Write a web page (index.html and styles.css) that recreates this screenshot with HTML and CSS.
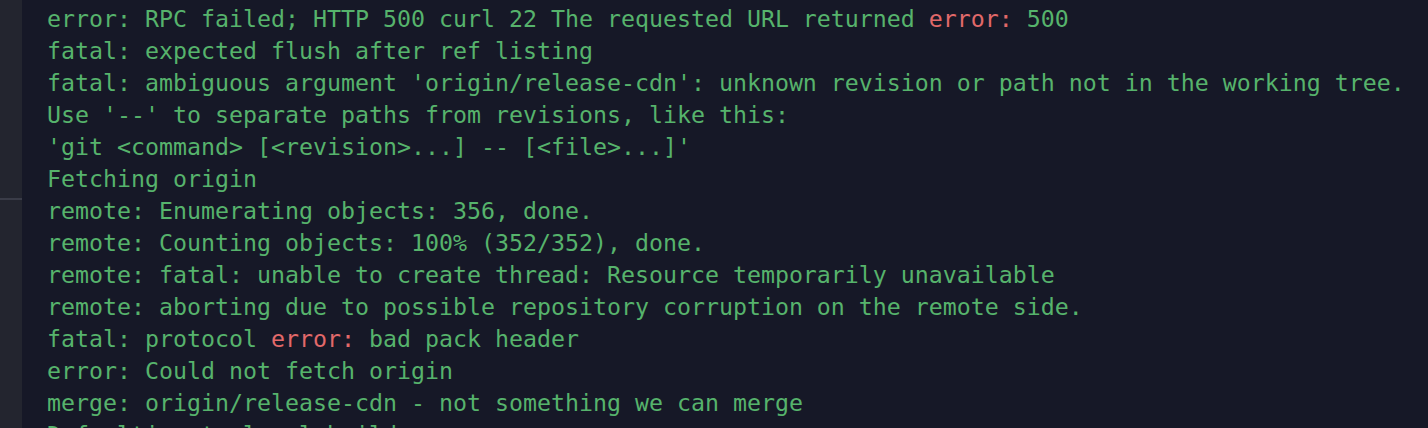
FILE: index.html
```html
<!DOCTYPE html>
<html>
<head>
<meta charset="utf-8">
<link rel="stylesheet" href="styles.css">
</head>
<body>
<div class="app">
  <aside class="sidebar">
    <div class="sidebar-top"></div>
    <div class="sidebar-divider"></div>
    <div class="sidebar-bottom"></div>
  </aside>
  <main class="terminal">
    <div class="line">error: RPC failed; HTTP 500 curl 22 The requested URL returned <span class="err">error:</span> 500</div>
    <div class="line">fatal: expected flush after ref listing</div>
    <div class="line">fatal: ambiguous argument 'origin/release-cdn': unknown revision or path not in the working tree.</div>
    <div class="line">Use '--' to separate paths from revisions, like this:</div>
    <div class="line">'git &lt;command&gt; [&lt;revision&gt;...] -- [&lt;file&gt;...]'</div>
    <div class="line">Fetching origin</div>
    <div class="line">remote: Enumerating objects: 356, done.</div>
    <div class="line">remote: Counting objects: 100% (352/352), done.</div>
    <div class="line">remote: fatal: unable to create thread: Resource temporarily unavailable</div>
    <div class="line">remote: aborting due to possible repository corruption on the remote side.</div>
    <div class="line">fatal: protocol <span class="err">error:</span> bad pack header</div>
    <div class="line">error: Could not fetch origin</div>
    <div class="line">merge: origin/release-cdn - not something we can merge</div>
    <div class="line">Defaulting to local build</div>
  </main>
</div>
</body>
</html>
```

FILE: styles.css
```css
html, body {
  margin: 0;
  padding: 0;
  height: 100%;
  background: #161827;
  overflow: hidden;
}

.app {
  display: flex;
  height: 428px;
  overflow: hidden;
}

.sidebar {
  width: 22px;
  flex: none;
  display: flex;
  flex-direction: column;
  background: #23252f;
}

.sidebar-top {
  height: 198px;
}

.sidebar-divider {
  height: 2px;
  background: #3a3c48;
}

.sidebar-bottom {
  flex: 1;
}

.terminal {
  flex: 1;
  padding: 3px 0 0 25px;
  font-family: "DejaVu Sans Mono", "Liberation Mono", monospace;
  font-size: 23.25px;
  line-height: 32px;
  color: #56b36c;
}

.line {
  white-space: pre;
  height: 32px;
}

.err {
  color: #e2696a;
}
```
